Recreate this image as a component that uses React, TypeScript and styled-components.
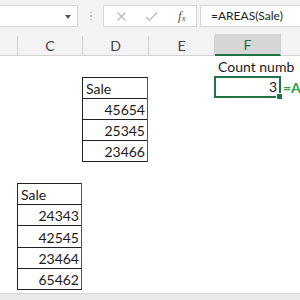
import styled, { createGlobalStyle } from "styled-components";

const GlobalStyle = createGlobalStyle`
  html, body {
    margin: 0;
    padding: 0;
    background: #fff;
  }
  body {
    width: 300px;
    height: 300px;
    overflow: hidden;
    font-family: Lato, "Liberation Sans", sans-serif;
    color: #1a1a1a;
  }
`;

const COLS = "18px 65px 66px 66px 66px 19px";

const upper = [45654, 25345, 23466];
const lower = [24343, 42545, 23464, 65462];

function App() {
  return (
    <>
      <GlobalStyle />
      <Page>
        <TopBar>
          <NameBox>
            <Arrow />
          </NameBox>
          <Grip>
            <i />
            <i />
            <i />
          </Grip>
          <FxBox>
            <svg width="11" height="11" viewBox="0 0 11 11">
              <path d="M1.5 1.5 L9.5 9.5 M9.5 1.5 L1.5 9.5" stroke="#b8b8b8" strokeWidth="1.2" fill="none" />
            </svg>
            <svg width="13" height="11" viewBox="0 0 13 11">
              <path d="M1 6 L4.5 9.5 L12 1.5" stroke="#b8b8b8" strokeWidth="1.2" fill="none" />
            </svg>
            <Fx>
              f<sub>x</sub>
            </Fx>
          </FxBox>
          <Formula>=AREAS(Sale)</Formula>
        </TopBar>

        <Headers>
          <Head />
          <Head>C</Head>
          <Head>D</Head>
          <Head>E</Head>
          <Head selected>F</Head>
          <Head last />
        </Headers>

        <Sheet>
          <Label col={5} row={1}>Count numb</Label>
          <Selected col={5} row={2}>
            3
            <Handle />
          </Selected>
          <Hint col={6} row={2}>=A</Hint>

          <Table col={3} row={2} span={4}>
            <Cell>Sale</Cell>
            {upper.map((v) => (
              <Cell key={v} num>
                {v}
              </Cell>
            ))}
          </Table>

          <Table col={2} row={7} span={5}>
            <Cell>Sale</Cell>
            {lower.map((v) => (
              <Cell key={v} num>
                {v}
              </Cell>
            ))}
          </Table>
        </Sheet>

        <Footer />
      </Page>
    </>
  );
}

export default App;

const Page = styled.div`
  width: 300px;
  height: 300px;
  display: flex;
  flex-direction: column;
  overflow: hidden;
`;

const TopBar = styled.div`
  height: 34px;
  flex-shrink: 0;
  background: #f3f3f3;
  display: flex;
  align-items: flex-start;
  padding-top: 5px;
  box-sizing: border-box;
`;

const NameBox = styled.div`
  width: 79px;
  height: 22px;
  margin-left: -1px;
  box-sizing: border-box;
  background: #fff;
  border: 1px solid #d6d6d6;
  position: relative;
`;

const Arrow = styled.span`
  position: absolute;
  right: 6px;
  top: 9px;
  border-left: 3.5px solid transparent;
  border-right: 3.5px solid transparent;
  border-top: 4px solid #555;
`;

const Grip = styled.div`
  width: 25px;
  height: 22px;
  display: flex;
  flex-direction: column;
  align-items: center;
  justify-content: center;
  gap: 2px;

  i {
    width: 2px;
    height: 1.5px;
    background: #b5b5b5;
  }
`;

const FxBox = styled.div`
  width: 94px;
  height: 22px;
  box-sizing: border-box;
  background: #fff;
  border: 1px solid #d6d6d6;
  display: flex;
  align-items: center;
  padding-left: 12px;
  gap: 18px;
`;

const Fx = styled.span`
  font-family: "Liberation Serif", serif;
  font-style: italic;
  font-size: 13px;
  color: #555;
  margin-left: 2px;

  sub {
    font-size: 9px;
    vertical-align: -1px;
  }
`;

const Formula = styled.div`
  flex: 1;
  height: 22px;
  margin-left: 3px;
  margin-right: -2px;
  box-sizing: border-box;
  background: #fff;
  border: 1px solid #d6d6d6;
  padding-left: 10px;
  font-size: 12px;
  line-height: 20px;
  color: #222;
`;

const Headers = styled.div`
  height: 21.5px;
  flex-shrink: 0;
  display: grid;
  grid-template-columns: ${COLS};
  background: #f3f3f3;
  border-bottom: 1px solid #d4d4d4;
  box-sizing: border-box;
`;

const Head = styled.div<{ selected?: boolean; last?: boolean }>`
  display: flex;
  align-items: center;
  justify-content: center;
  font-size: 14px;
  color: ${(p) => (p.selected ? "#217346" : "#444")};
  background: ${(p) => (p.selected ? "#d6d6d6" : "transparent")};
  border-right: ${(p) => (p.last ? "none" : "1px solid #cfcfcf")};
  border-bottom: ${(p) => (p.selected ? "2px solid #217346" : "none")};
  margin-top: ${(p) => (p.selected ? "0" : "2px")};
  margin-bottom: ${(p) => (p.selected ? "-1px" : "0")};
  padding-top: ${(p) => (p.selected ? "1px" : "0")};
`;

const Sheet = styled.div`
  height: 234.5px;
  flex-shrink: 0;
  display: grid;
  grid-template-columns: ${COLS};
  grid-auto-rows: 21.3px;
`;

type Place = { col: number; row: number; span?: number };

const Label = styled.div<Place>`
  grid-column: ${(p) => p.col};
  grid-row: ${(p) => p.row};
  white-space: nowrap;
  font-size: 14px;
  padding-left: 3px;
  line-height: 21px;
  overflow: visible;
  z-index: 1;
`;

const Selected = styled.div<Place>`
  grid-column: ${(p) => p.col};
  grid-row: ${(p) => p.row};
  position: relative;
  margin-left: -1px;
  margin-top: -1px;
  box-sizing: border-box;
  border: 2px solid #217346;
  text-align: right;
  font-size: 14px;
  line-height: 18px;
  padding-right: 2px;
`;

const Handle = styled.span`
  position: absolute;
  right: -4px;
  bottom: -4px;
  width: 5px;
  height: 5px;
  background: #217346;
  border: 1px solid #fff;
`;

const Hint = styled.div<Place>`
  grid-column: ${(p) => p.col};
  grid-row: ${(p) => p.row};
  white-space: nowrap;
  font-size: 14px;
  font-weight: 700;
  color: #22a34a;
  padding-left: 2px;
  line-height: 21px;
`;

const Table = styled.div<Place>`
  grid-column: ${(p) => p.col};
  grid-row: ${(p) => p.row} / span ${(p) => p.span ?? 1};
  display: flex;
  flex-direction: column;
  border: 1px solid #222;
  border-right-color: #555;
  margin-left: -1px;
  margin-right: 1px;
  box-sizing: border-box;
`;

const Cell = styled.div<{ num?: boolean }>`
  flex: 1;
  display: flex;
  align-items: center;
  justify-content: ${(p) => (p.num ? "flex-end" : "flex-start")};
  padding: 1px 2px 0 3px;
  font-size: 14px;
  & + & {
    border-top: 1px solid #222;
  }
`;

const Footer = styled.div`
  margin-top: auto;
  height: 6px;
  background: #e9e9e9;
  border-top: 1px solid #d6d6d6;
`;
